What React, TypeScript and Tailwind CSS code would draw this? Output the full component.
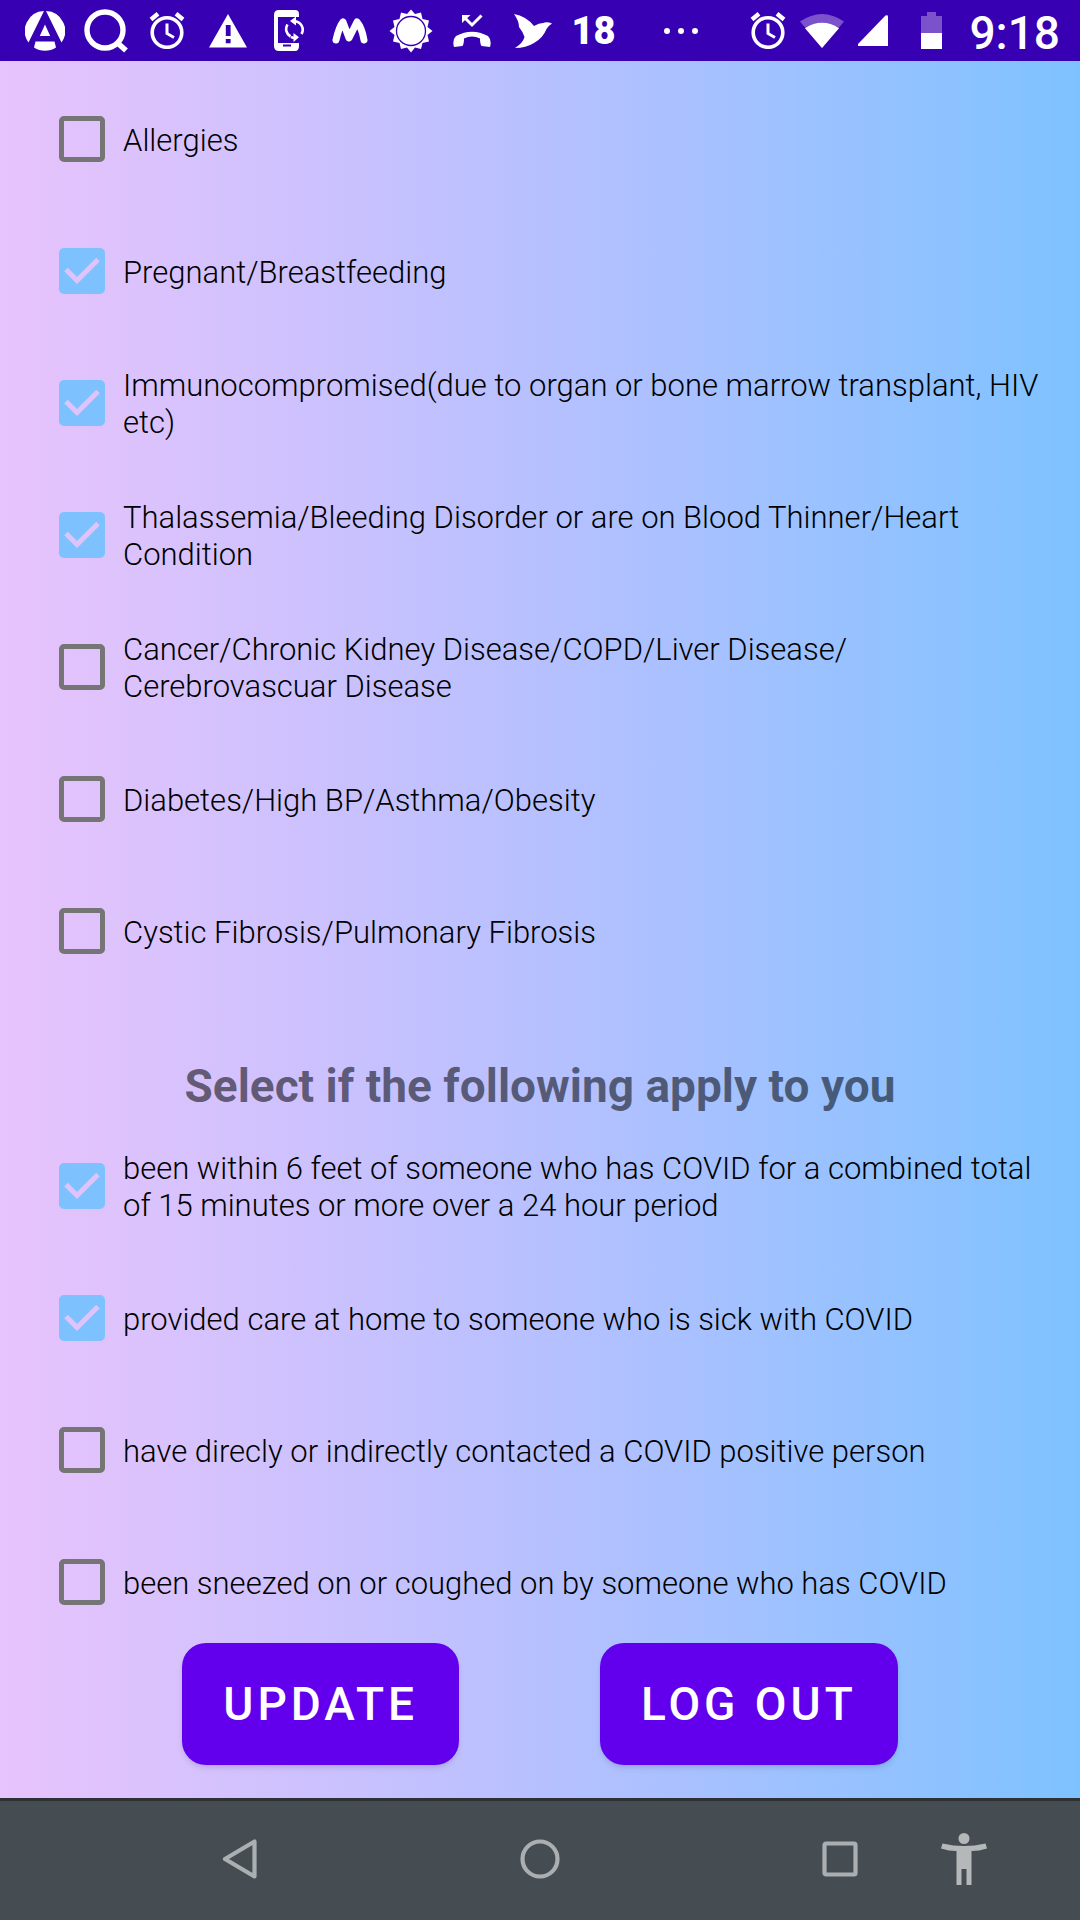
import React from "react";

const conditions = [
  { text: "Allergies", checked: false },
  { text: "Pregnant/Breastfeeding", checked: true },
  { text: "Immunocompromised(due to organ or bone marrow transplant, HIV etc)", checked: true },
  { text: "Thalassemia/Bleeding Disorder or are on Blood Thinner/Heart Condition", checked: true },
  { text: "Cancer/Chronic Kidney Disease/COPD/Liver Disease/\u200BCerebrovascuar Disease", checked: false },
  { text: "Diabetes/High BP/Asthma/Obesity", checked: false },
  { text: "Cystic Fibrosis/Pulmonary Fibrosis", checked: false },
];

const exposures = [
  { text: "been within 6 feet of someone who has COVID for a combined total of 15 minutes or more over a 24 hour period", checked: true },
  { text: "provided care at home to someone who is sick with COVID", checked: true },
  { text: "have direcly or indirectly contacted a COVID positive person", checked: false },
  { text: "been sneezed on or coughed on by someone who has COVID", checked: false },
];

function Option({ id, text, checked }: { id: string; text: string; checked: boolean }) {
  return (
    <li className="flex h-[132px] items-center">
      <span className="relative block size-[46px] shrink-0">
        <input
          id={id}
          type="checkbox"
          defaultChecked={checked}
          className="peer block size-[46px] appearance-none rounded-[5px] border-[5px] border-[#757575] checked:border-[#7dc2ff] checked:bg-[#7dc2ff]"
        />
        <svg viewBox="0 0 46 46" className="pointer-events-none absolute inset-0 hidden size-[46px] peer-checked:block">
          <path d="M7 21.500 18 32.500 39 11.500" fill="none" stroke="#dfc4fc" strokeWidth="5" />
        </svg>
      </span>
      <label htmlFor={id} className="ml-[18px] flex-1 pt-[2px] text-[31px] leading-[37px] font-light text-black">
        {text}
      </label>
    </li>
  );
}

function AlarmIcon() {
  return (
    <svg viewBox="0 0 36 37" className="h-[37px] w-9 shrink-0" fill="none" stroke="white">
      <circle cx="18" cy="20.5" r="14.8" strokeWidth="3.6" />
      <path d="M18 11.5V21.5L25 25.5" strokeWidth="3" />
      <path d="M2 7.5 9 1.8M34 7.5 27 1.8" strokeWidth="4.4" />
    </svg>
  );
}

function NotificationIcons() {
  const slot = "flex w-[61px] items-center justify-center";
  return (
    <div className="flex h-[61px] pl-[14px]">
      <span className={slot}>
        <svg viewBox="0 0 40 40" className="size-10" fill="white">
          <path d="M19 0 3.500 31.6A20 20 0 0 1 19 0ZM21 0 36.500 31.6A20 20 0 0 0 21 0ZM20 13.500 25.200 25H14.800ZM10.500 30.500H29.500L31 36.500A20 20 0 0 1 9 36.500Z" />
        </svg>
      </span>
      <span className={slot}>
        <svg viewBox="0 0 44 44" className="size-11" fill="none" stroke="white">
          <circle cx="21" cy="21" r="18" strokeWidth="5.4" />
          <path d="M33 33.500 42 41.500" strokeWidth="5.6" />
        </svg>
      </span>
      <span className={slot}><AlarmIcon /></span>
      <span className={slot}>
        <svg viewBox="0 0 38 34" className="h-[34px] w-[38px]">
          <path d="M19 0 38 33.500H0Z" fill="white" />
          <path d="M16.800 11H21.600V22H16.800ZM16.800 25H21.600V29.200H16.800Z" fill="#3700b3" />
        </svg>
      </span>
      <span className={slot}>
        <svg viewBox="0 0 30 41" className="h-[41px] w-[30px]">
          <path d="M5 0H21Q25 0 25 4V7H4V33H25V36Q25 41 21 41H5Q0 41 0 36V5Q0 0 5 0Z" fill="white" />
          <path d="M9 35.500H17" stroke="#3700b3" strokeWidth="2" />
          <path d="M16.500 26.500A8.500 8.500 0 0 1 13.500 14.500M20 11.200A8.500 8.500 0 0 1 27.500 24M22 27.800Q19 28 17 26.800" fill="none" stroke="white" strokeWidth="2.6" />
          <path d="M16 11 22 6.500V15.500ZM25 27.300 19.500 23V32Z" fill="white" />
        </svg>
      </span>
      <span className={slot}>
        <svg viewBox="0 0 36 26" className="h-[26px] w-9">
          <path d="M4 22Q7 9 11 4L17 20 25 4Q30 10 32 22" fill="none" stroke="white" strokeWidth="7" strokeLinecap="round" strokeLinejoin="round" />
        </svg>
      </span>
      <span className={slot}>
        <svg viewBox="0 0 44 44" className="size-11">
          <path d="M22 .5 26 5 32 3.500 33.500 10 40 11.500 38.500 18 43.500 22 38.500 26 40 32.500 33.500 34 32 40 26 38.500 22 43.500 18 38.500 12 40 10.500 34 4 32.500 5.500 26 .5 22 5.500 18 4 11.500 10.500 10 12 3.500 18 5Z" fill="white" />
          <circle cx="22" cy="22" r="14.500" fill="white" stroke="#3700b3" strokeWidth="1.300" />
        </svg>
      </span>
      <span className={slot}>
        <svg viewBox="0 0 38 34" className="h-[34px] w-[38px]" fill="white">
          <path d="M1 33Q-1 26 3 22 19 13.500 35 22 39 26 37 33L28.500 32Q27 30 27 24.500 19 20.500 11 24.500 11 30 9.500 32Z" />
          <path d="M12 4 19 11 28.500 1.500" fill="none" stroke="white" strokeWidth="3" />
          <path d="M9 1H17.500L9 9Z" />
        </svg>
      </span>
      <span className={slot}>
        <svg viewBox="0 0 38 34" className="h-[34px] w-[38px]" fill="white">
          <path d="M0 0Q12 2 20 12 25 9 29 9 33 7.500 38 9.500 34 12 32.500 15 29 24 20 29 12 34 1 34 9 29 10.500 23 9 18 5 13 5 7 0 0Z" />
        </svg>
      </span>
      <span className="flex w-[61px] items-center justify-center font-['Roboto'] text-[38px] leading-none font-black text-white">18</span>
    </div>
  );
}

function StatusBar() {
  return (
    <header className="flex h-[61px] shrink-0 items-center justify-between bg-[#3700b3] pr-5">
      <NotificationIcons />
      <svg viewBox="0 0 36 8" className="mr-8 ml-5 h-2 w-9 shrink-0" fill="white">
        <circle cx="4" cy="4" r="3" /><circle cx="18" cy="4" r="3" /><circle cx="32" cy="4" r="3" />
      </svg>
      <div className="flex items-center">
        <AlarmIcon />
        <svg viewBox="0 0 44 34" className="ml-[14px] h-[34px] w-11 shrink-0">
          <path d="M22 34 0 7.500Q22-7.500 44 7.500Z" fill="#7b52cc" />
          <path d="M22 34 5 14.200Q22 3.500 39 14.200Z" fill="white" />
        </svg>
        <svg viewBox="0 0 30 31" className="ml-[14px] h-[31px] w-[30px] shrink-0">
          <path d="M30 1.500V31H0V29L27.500 .5Q30-.5 30 1.500Z" fill="white" />
        </svg>
        <svg viewBox="0 0 21 37" className="ml-[33px] h-[37px] w-[21px] shrink-0">
          <path d="M6 0H15V4H21V21H0V4H6Z" fill="#7b52cc" />
          <path d="M0 21H21V37H0Z" fill="white" />
        </svg>
        <time className="ml-[27px] pt-1 text-[46px] leading-none font-medium text-white">9:18</time>
      </div>
    </header>
  );
}

function NavBar() {
  const button = "flex h-20 w-20 items-center justify-center";
  return (
    <nav className="flex h-[122px] shrink-0 items-center border-t-[3px] border-[#2d3133] bg-[#454d52] pb-1 pl-[200px]">
      <button aria-label="Back" className={button}>
        <svg viewBox="0 0 36 40" className="h-10 w-9" fill="none" stroke="#abafb1" strokeWidth="4.200" strokeLinejoin="round">
          <path d="M32.500 2.500V37.500L3 20Z" />
        </svg>
      </button>
      <button aria-label="Home" className={`${button} mx-auto`}>
        <svg viewBox="0 0 40 40" className="size-10" fill="none" stroke="#abafb1" strokeWidth="4.200">
          <circle cx="20" cy="20" r="17.500" />
        </svg>
      </button>
      <button aria-label="Recent apps" className={button}>
        <svg viewBox="0 0 36 36" className="size-9" fill="none" stroke="#abafb1" strokeWidth="4.200">
          <rect x="2.500" y="2.500" width="31" height="31" rx="1.500" />
        </svg>
      </button>
      <button aria-label="Accessibility" className="mr-[74px] ml-[42px] flex h-20 w-[84px] items-center justify-center">
        <svg viewBox="0 0 46 52" className="h-[52px] w-[46px]" fill="#b5b8b9">
          <circle cx="23" cy="5.500" r="5.500" />
          <path d="M1.500 10.500Q23 15.500 44.500 10.500L46 15.500Q38 18 30.500 18V52H25.500V36H20.500V52H15.500V18Q8 18 0 15.500Z" />
        </svg>
      </button>
    </nav>
  );
}

export default function App() {
  const action = "h-[122px] rounded-3xl bg-[#6200ee] px-[41px] text-[46px] leading-none font-medium tracking-[4px] text-white shadow-md";
  return (
    <div className="flex min-h-screen flex-col bg-linear-to-r from-[#e8c3fc] via-[#b7c0ff] to-[#7dc2ff] font-['Roboto',sans-serif]">
      <StatusBar />
      <main className="flex-1 pt-3">
        <ul className="pr-6 pl-[59px]">
          {conditions.map((item, i) => (
            <Option key={item.text} id={`condition-${i}`} {...item} />
          ))}
        </ul>
        <h1 className="pt-[61px] pb-[6px] text-center text-[46px] leading-[56px] font-bold text-black/54">
          Select if the following apply to you
        </h1>
        <ul className="pr-6 pl-[59px]">
          {exposures.map((item, i) => (
            <Option key={item.text} id={`exposure-${i}`} {...item} />
          ))}
        </ul>
        <div className="-mt-[5px] flex justify-center gap-[141px]">
          <button className={action}>UPDATE</button>
          <button className={action}>LOG OUT</button>
        </div>
      </main>
      <NavBar />
    </div>
  );
}
